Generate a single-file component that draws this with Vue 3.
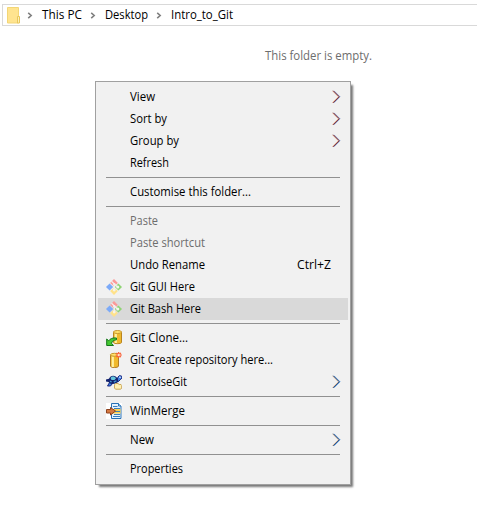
<script setup>
const crumbs = [
  { label: 'This PC', w: 40 },
  { label: 'Desktop', w: 43 },
  { label: 'Intro_to_Git', w: 62 },
]
const groups = [
  [
    { label: 'View', w: 25, sub: true, warm: true },
    { label: 'Sort by', w: 37, sub: true, warm: true },
    { label: 'Group by', w: 49, sub: true, warm: true },
    { label: 'Refresh', w: 39 },
  ],
  [{ label: 'Customise this folder...', w: 121 }],
  [
    { label: 'Paste', w: 28, disabled: true },
    { label: 'Paste shortcut', w: 75, disabled: true },
    { label: 'Undo Rename', w: 75, key: 'Ctrl+Z' },
    { label: 'Git GUI Here', w: 65, icon: 'git' },
    { label: 'Git Bash Here', w: 71, icon: 'git', active: true },
  ],
  [
    { label: 'Git Clone...', w: 58, icon: 'clone' },
    { label: 'Git Create repository here...', w: 143, icon: 'create' },
    { label: 'TortoiseGit', w: 57, icon: 'tortoise', sub: true },
  ],
  [{ label: 'WinMerge', w: 55, icon: 'merge' }],
  [{ label: 'New', w: 24, sub: true }],
  [{ label: 'Properties', w: 53 }],
]
</script>

<template>
  <main class="window">
    <header class="address">
      <svg class="folder" width="14" height="17" viewBox="0 0 14 17">
        <path d="M.5.5h11v15.500H.5z" fill="#ffe48f" stroke="#f3d676" />
        <path d="M10.500 9.500h2v6.500h-2z" fill="#fff0b5" stroke="#e8c75c" />
      </svg>
      <template v-for="c in crumbs" :key="c.label">
        <svg class="sep" width="6" height="7" viewBox="0 0 6 7">
          <path d="M1.200.8 4.200 3.500 1.200 6.200" fill="none" stroke="#808080" stroke-width="1.600" />
        </svg>
        <svg class="text" :width="c.w" height="18">
          <text x="0" y="13" :textLength="c.w" lengthAdjust="spacingAndGlyphs">{{ c.label }}</text>
        </svg>
      </template>
    </header>
    <p class="empty">
      <svg class="text" width="107" height="18">
        <text x="0" y="13" textLength="107" lengthAdjust="spacingAndGlyphs">This folder is empty.</text>
      </svg>
    </p>

    <nav class="menu">
      <div v-for="(g, i) in groups" :key="i" class="group">
        <div v-for="m in g" :key="m.label" class="item" :class="{ active: m.active, disabled: m.disabled }">
          <span class="icon">
            <svg v-if="m.icon === 'git'" width="16" height="16" viewBox="0 0 16 16">
              <path d="M8 0l3.900 3.900L8 7.200 4.100 3.900z" fill="#fb9a98" />
              <path d="M3.600 4.400L7.200 8l-3.600 3.600L0 8z" fill="#7caaf8" />
              <path d="M12.400 4.400L16 8l-3.600 3.600L8.800 8z" fill="#8fd474" />
              <path d="M8 8.800l3.900 3.300L8 16l-3.900-3.900z" fill="#ffe28a" />
              <path d="M5.500 2.300L8.300 5v6M8.300 5l3.200 3" fill="none" stroke="#f3efef" stroke-width="1.200" />
              <circle cx="8.300" cy="5.300" r="1.200" fill="#f3efef" />
              <circle cx="11.800" cy="8" r="1.500" fill="#f3f5ef" />
              <circle cx="8.200" cy="11" r="1.400" fill="#f5f3ea" />
            </svg>
            <svg v-else-if="m.icon === 'clone'" width="16" height="16" viewBox="0 0 16 16">
              <path d="M7.500 2v10.500c0 1.500 8 1.500 8 0V2z" fill="#f0b92c" stroke="#b98420" />
              <path d="M9.800 3v10" stroke="#fff0a0" stroke-width="2.200" />
              <ellipse cx="11.500" cy="2" rx="4" ry="1.500" fill="#ffe26b" stroke="#c8962c" />
              <path d="M.7 15.500V9l2 1.800C4 8.800 6.500 7.500 10.500 8v1.800C8 10 6.500 11 5.400 13.200l2.100 2.300z" fill="#45c932" stroke="#14751a" />
            </svg>
            <svg v-else-if="m.icon === 'create'" width="16" height="16" viewBox="0 0 16 16">
              <path d="M4.500 3v11c0 2 8 2 8 0V3z" fill="#f0b92c" stroke="#b07c28" />
              <path d="M6.800 4v11" stroke="#fff0a0" stroke-width="2.200" />
              <ellipse cx="8.500" cy="2.800" rx="4" ry="1.500" fill="#ffe26b" stroke="#c8962c" />
              <path d="M12.700 0v6M9.700 3h6.200M10.500.8l4.400 4.400M14.900.8l-4.400 4.400" stroke="#fb5a30" stroke-width="1.200" />
              <circle cx="12.700" cy="3" r="1.200" fill="#ffe3c0" />
            </svg>
            <svg v-else-if="m.icon === 'tortoise'" width="16" height="16" viewBox="0 0 16 16">
              <path d="M3.500 8.500l-2 3.500h3l2-2.500M11 6l1-3L13.500 1.500l2.200.7.200 2-1.700 1.600-1.700 1.700z" fill="#3f7fe0" stroke="#101c78" stroke-width=".9" />
              <path d="M0 5.500l3-.7C4.500 1 9.500.7 11.800 5l.7 2.500C10 10.500 4.500 11 2.500 8L0 7.500z" fill="#12226e" />
              <path d="M4.500 4c1.500-2 4-2 5.500.2L8.500 6h-3z" fill="#62c4da" />
              <path d="M3.800 6.500l2 .7-.3 1.300-1.500-.4zM7.500 7.200l2.500-1 .8 1-2.600 1.500z" fill="#3f93cf" />
              <circle cx="14" cy="3.200" r=".8" fill="#fff" />
              <path d="M8.500 10.700L9.700 9.500h2.300l1.200 1H15l.7 1v2.500l-1 1.200H9.500l-1-1.200z" fill="#fff0b4" stroke="#c9a75c" />
            </svg>
            <svg v-else-if="m.icon === 'merge'" width="16" height="16" viewBox="0 0 16 16">
              <path d="M0 0h16v16H0z" fill="#fff" />
              <path d="M5.500.5h7L15 3v12.500H5.500z" fill="#e4f2ff" stroke="#2871b5" />
              <path d="M6 6h8.500v4.500H6z" fill="#ffd24f" />
              <path d="M12.500.5V3H15" fill="#b6dcf4" stroke="#2871b5" />
              <path d="M7 3.500h4.500M8 5.500h6M9 8.500h5M8 11.500h6M7 13.500h7" stroke="#3c7fbe" />
              <path d="M.5 6.500h4v-2L9.500 8l-5 4V10h-4z" fill="#d77a42" stroke="#8e431f" />
            </svg>
          </span>
          <svg class="text" :width="m.w" height="18">
            <text x="0" y="13" :textLength="m.w" lengthAdjust="spacingAndGlyphs">{{ m.label }}</text>
          </svg>
          <svg v-if="m.key" class="text key" width="34" height="18">
            <text x="0" y="13" textLength="34" lengthAdjust="spacingAndGlyphs">{{ m.key }}</text>
          </svg>
          <svg v-if="m.sub" class="arrow" :class="{ warm: m.warm }" width="9" height="14" viewBox="0 0 9 14">
            <path class="left" d="M.500.800 6.500 6.800.500 12.800" />
            <path class="right" d="M2 .800 8 6.800 2 12.800" />
            <path class="core" d="M1.300.800 7.300 6.800 1.300 12.800" />
          </svg>
        </div>
      </div>
    </nav>
  </main>
</template>

<style>
body {
  background: #fff;
}
</style>

<style scoped>
.window {
  position: relative;
  box-sizing: border-box;
  width: 477px;
  height: 506px;
  padding: 4px 0 0 2px;
  overflow: hidden;
  background: #fff;
  font-family: "Open Sans", "Noto Sans", sans-serif;
  font-size: 12px;
  color: #000;
}
svg {
  display: block;
  flex: none;
}
.text {
  overflow: visible;
}
.text text {
  fill: currentColor;
}
.address {
  display: flex;
  align-items: center;
  box-sizing: border-box;
  height: 22px;
  padding-left: 4px;
  border: 1px solid #d9d9d9;
  border-right: 0;
}
.sep {
  margin: 0 9px 0 8px;
}
.folder {
  margin-right: -2px;
}
.empty {
  margin: 21px 0 0 263px;
  color: #6d6d6d;
}
.menu {
  position: absolute;
  left: 95px;
  top: 81px;
  box-sizing: border-box;
  width: 256px;
  padding: 4px 2px;
  border: 1px solid #a0a0a0;
  background: #f1f1f1;
  box-shadow: 3px 3px 2px -1px #777;
}
.group + .group::before {
  content: "";
  display: block;
  height: 1px;
  margin: 3px 8px;
  background: #919191;
}
.item {
  display: flex;
  align-items: center;
  height: 22px;
}
.active {
  background: #d9d9d9;
}
.disabled {
  color: #6d6d6d;
}
.icon {
  width: 16px;
  height: 16px;
  margin: 0 8px;
}
.key {
  margin-left: auto;
  margin-right: 17px;
}
.arrow {
  margin-left: auto;
  margin-right: 7px;
}
.arrow path {
  fill: none;
  stroke-width: 0.9;
}
.arrow .left {
  stroke: #dfae7c;
}
.arrow .right {
  stroke: #4a9be6;
}
.arrow .core {
  stroke: #173a78;
}
.arrow.warm .left {
  stroke: #dc9468;
}
.arrow.warm .right {
  stroke: #7fa6e0;
}
.arrow.warm .core {
  stroke: #6a1a30;
}
</style>
